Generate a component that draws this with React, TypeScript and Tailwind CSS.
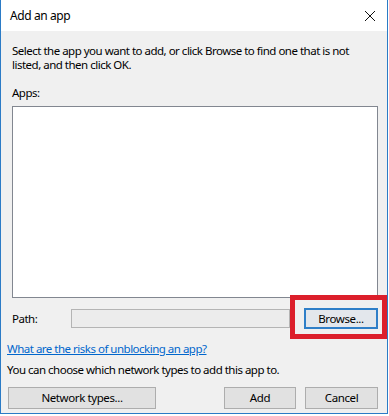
import React from 'react';

const font = { fontFamily: '"Noto Sans", "Open Sans", sans-serif' };

function DialogButton({ label, className = '' }: { label: string; className?: string }) {
  return (
    <button
      type="button"
      className={`flex h-[22px] items-center justify-center border border-[#adadad] bg-[#e1e1e1] text-[11.5px] tracking-[-0.4px] text-black ${className}`}
    >
      {label}
    </button>
  );
}

export default function App() {
  return (
    <div className="h-[416px] w-[389px] bg-white" style={font}>
      <div className="flex h-[414px] w-[388px] flex-col border-x border-b border-[#2b7bc6] bg-[#f0f0f0]">
        {/* title bar */}
        <div className="flex h-[31px] items-center justify-between bg-white pl-[9px] pr-[10px]">
          <span className="text-[12px] tracking-[-0.4px] text-black">Add an app</span>
          <svg width="12" height="12" viewBox="0 0 12 12" className="mr-[1px]">
            <path d="M1 1L11 11M11 1L1 11" stroke="#111" strokeWidth="1" />
          </svg>
        </div>

        <div className="flex flex-1 flex-col pl-[11px] pr-[9px] text-[11.5px] leading-[14px] tracking-[-0.5px] text-black">
          <p className="mt-[13px]">
            Select the app you want to add, or click Browse to find one that is not
            <br />
            listed, and then click OK.
          </p>
          <p className="mt-[14px]">Apps:</p>
          <div className="mt-[6px] h-[192px] border border-[#828790] bg-white" />

          <div className="relative mt-[10px] flex h-[21px] items-center">
            <span className="w-[59px]">Path:</span>
            <div className="h-[19px] w-[219px] border border-[#b4b4b4] bg-[#ececec]" />
            <button
              type="button"
              className="ml-auto flex h-[21px] w-[74px] items-center justify-center border-2 border-[#2f7fc8] bg-[#e3e7ec] text-[11.5px] tracking-[-0.4px]"
            >
              Browse...
            </button>
            <div className="pointer-events-none absolute left-[278px] top-[-13px] h-[44px] w-[97px] border-[5px] border-[#dc1f2b]" />
          </div>

          <a href="#" className="-ml-[5px] mt-[13px] w-fit text-[#0066cc] underline">
            What are the risks of unblocking an app?
          </a>
          <p className="-ml-[5px] mt-[7px]">You can choose which network types to add this app to.</p>

          <div className="-ml-[4px] mt-[10px] flex items-center">
            <DialogButton label="Network types..." className="w-[148px]" />
            <DialogButton label="Add" className="ml-auto w-[72px]" />
            <DialogButton label="Cancel" className="ml-[9px] w-[73px]" />
          </div>
        </div>
      </div>
    </div>
  );
}
